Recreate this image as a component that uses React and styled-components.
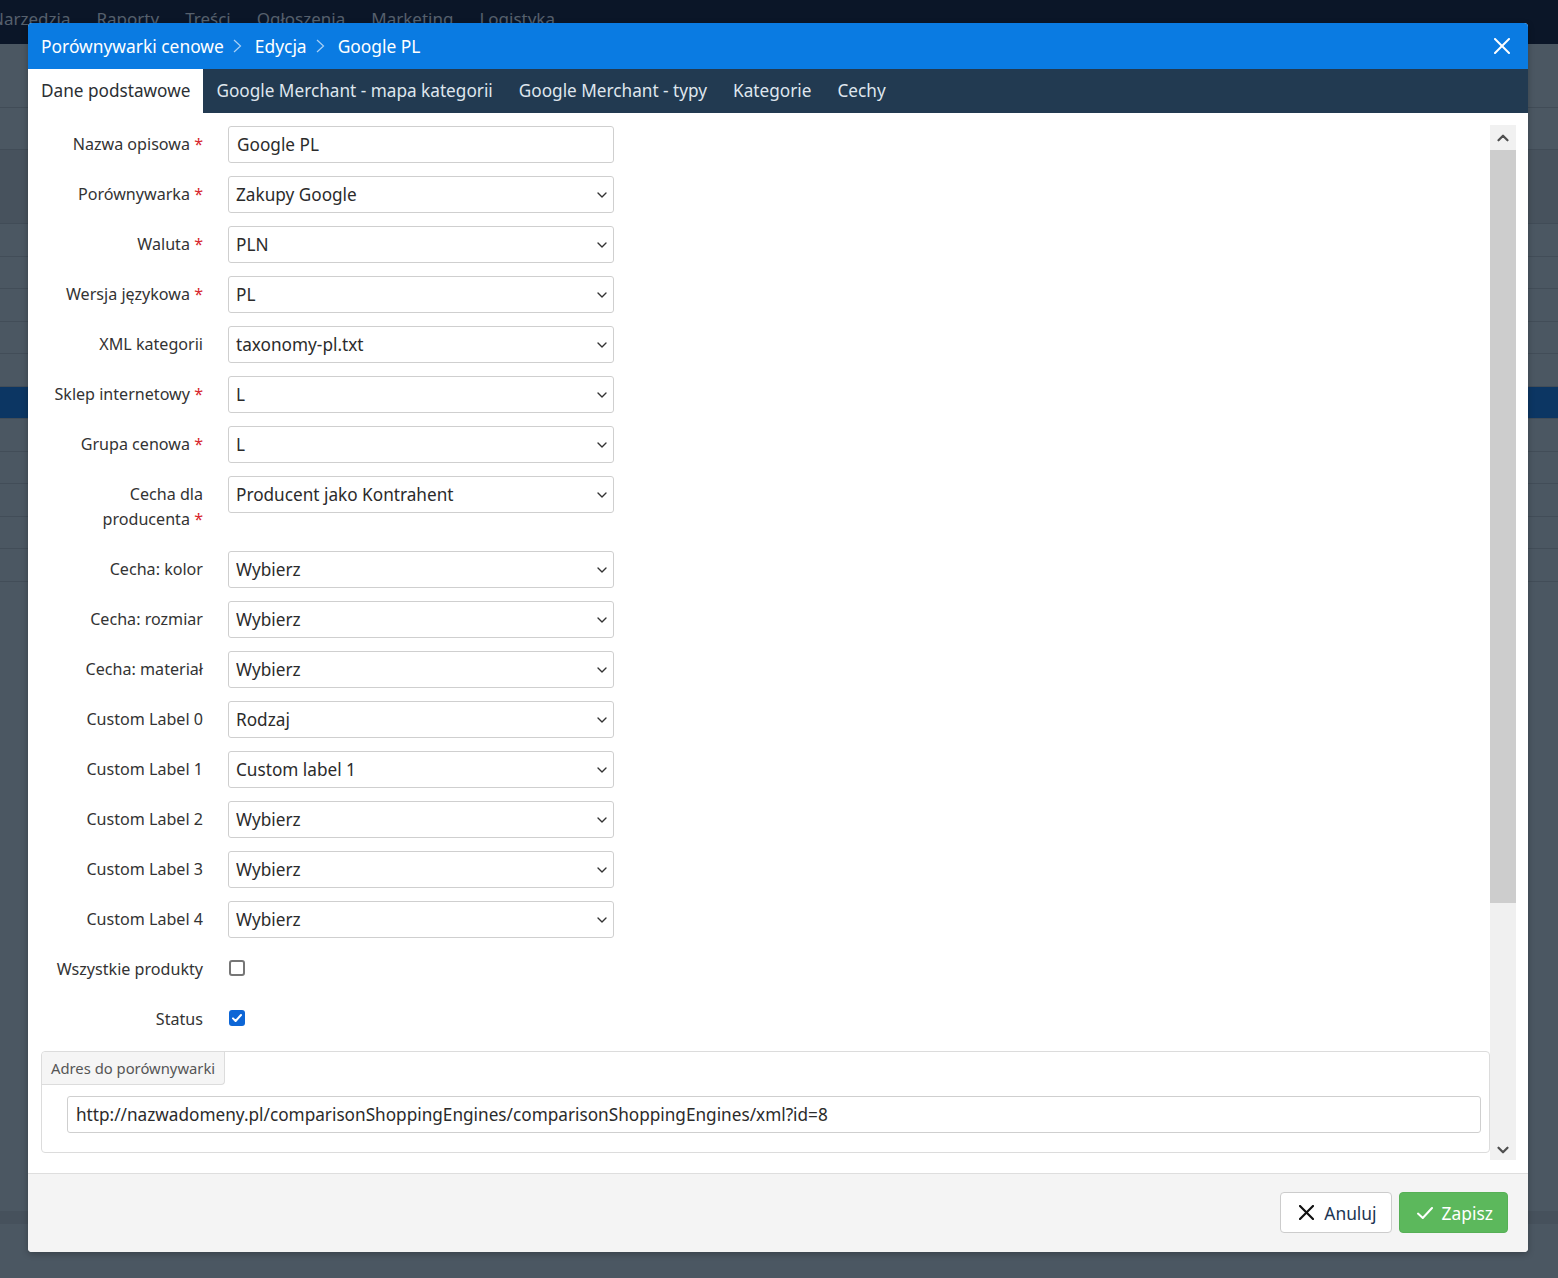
import styled, { createGlobalStyle } from 'styled-components'
import { ChevronDown, ChevronUp } from 'lucide-react'

const GlobalStyle = createGlobalStyle`
  html, body {
    margin: 0;
    padding: 0;
    font-family: "Noto Sans", "Open Sans", "Liberation Sans", sans-serif;
  }
  * { box-sizing: border-box; }
`

const Page = styled.div`
  position: relative;
  width: 1558px;
  height: 1278px;
  overflow: hidden;
  background: #4b5762;
`

const TopNav = styled.div`
  height: 44px;
  background: #0b1628;
  display: flex;
  align-items: center;
  gap: 26px;
  padding-bottom: 8px;
`

const NavItem = styled.span`
  font-size: 17px;
  color: #56606d;
  white-space: nowrap;
  &:first-child { margin-left: -9px; }
`

const Toolbar = styled.div`
  height: ${p => p.h}px;
  border-bottom: 1px solid #414c57;
  background: ${p => p.dark ? '#47525d' : 'transparent'};
`

const TableRow = styled.div`
  height: 32.5px;
  border-bottom: 1px solid #424d58;
  background: ${p => p.active ? '#0c3663' : 'transparent'};
`

const BottomBand = styled.div`
  margin-top: 629px;
  height: 13px;
  background: #46515c;
`

const Modal = styled.div`
  position: absolute;
  left: 28px;
  top: 23px;
  width: 1500px;
  height: 1229px;
  background: #fff;
  border-radius: 4px;
  overflow: hidden;
  display: flex;
  flex-direction: column;
  box-shadow: 0 2px 6px rgba(0, 0, 0, 0.25);
`

const Header = styled.div`
  height: 46px;
  flex: none;
  background: #0a7be2;
  display: flex;
  align-items: center;
  justify-content: space-between;
  padding: 0 18px 0 13px;
  color: #fff;
`

const Crumbs = styled.div`
  display: flex;
  align-items: center;
  font-size: 17.4px;
  padding-bottom: 1px;
`

const Sep = styled.svg`
  margin: 1px 13px 0 9px;
  color: #a9d0f5;
`

const CloseBtn = styled.button`
  border: 0;
  background: none;
  color: #fff;
  padding: 0;
  display: flex;
  cursor: pointer;
`

const Tabs = styled.div`
  height: 44px;
  flex: none;
  background: #223a51;
  display: flex;
`

const Tab = styled.div`
  padding: 0 13px;
  line-height: 44px;
  font-size: 17.2px;
  white-space: nowrap;
  color: ${p => p.active ? '#2b2f33' : '#dfe6ee'};
  background: ${p => p.active ? '#fff' : 'transparent'};
`

const Body = styled.div`
  flex: 1;
  display: flex;
  padding: 12px 12px 0 13px;
  min-height: 0;
`

const Content = styled.div`
  flex: 1;
  padding-top: 1px;
`

const Row = styled.div`
  display: grid;
  grid-template-columns: 162px 386px;
  column-gap: 25px;
  margin-bottom: 13px;
  align-items: start;
`

const Label = styled.label`
  text-align: right;
  font-size: 16.1px;
  line-height: 25px;
  padding: 6px 0;
  color: #333;
`

const Req = styled.span`
  color: #d8262c;
`

const Input = styled.input`
  width: 100%;
  height: 37px;
  border: 1px solid #cfcfcf;
  border-radius: 3px;
  padding: 0 8px;
  font-family: inherit;
  font-size: 17.2px;
  color: #2b2b2b;
  background: #fff;
  outline: none;
`

const SelectWrap = styled.div`
  position: relative;
  height: 37px;
`

const Select = styled.select`
  width: 100%;
  height: 37px;
  border: 1px solid #cfcfcf;
  border-radius: 3px;
  padding: 0 30px 0 7px;
  font-family: inherit;
  font-size: 17.2px;
  color: #2b2b2b;
  background: #fff;
  appearance: none;
  outline: none;
`

const Caret = styled(ChevronDown)`
  position: absolute;
  right: 4px;
  top: 11px;
  color: #333;
  pointer-events: none;
`

const CheckCell = styled.div`
  height: 37px;
  display: flex;
  align-items: center;
  padding: 0 0 3px 1px;
`

const Box = styled.span`
  width: 16px;
  height: 16px;
  border-radius: 3px;
  border: ${p => p.checked ? 'none' : '2px solid #767676'};
  background: ${p => p.checked ? '#0d66d6' : '#fff'};
  display: flex;
  align-items: center;
  justify-content: center;
  color: #fff;
`

const Fieldset = styled.div`
  border: 1px solid #dcdcdc;
  border-radius: 4px;
`

const Legend = styled.div`
  display: inline-block;
  height: 33px;
  line-height: 33px;
  padding: 0 9px;
  font-size: 14.8px;
  color: #555;
  background: #f5f5f5;
  border-right: 1px solid #dcdcdc;
  border-bottom: 1px solid #dcdcdc;
  border-bottom-right-radius: 4px;
  border-top-left-radius: 4px;
  vertical-align: top;
`

const UrlBox = styled.div`
  padding: 11px 8px 19px 25px;
`

const Scrollbar = styled.div`
  width: 26px;
  height: 1035px;
  flex: none;
  display: flex;
  flex-direction: column;
  background: #f0f0f0;
`

const ScrollBtn = styled.div`
  height: ${p => p.h}px;
  display: flex;
  align-items: center;
  justify-content: center;
  color: #505050;
  background: #f1f1f1;
`

const Thumb = styled.div`
  height: 753px;
  background: #cdcdcd;
`

const Track = styled.div`
  flex: 1;
`

const Footer = styled.div`
  flex: none;
  background: #f4f4f4;
  border-top: 1px solid #dedede;
  padding: 18px 20px 19px;
  display: flex;
  justify-content: flex-end;
  gap: 7px;
`

const Button = styled.button`
  height: 41px;
  display: flex;
  align-items: center;
  gap: ${p => p.primary ? 9 : 10}px;
  padding: 0 ${p => p.primary ? 14 : 14}px 0 ${p => p.primary ? 17 : 18}px;
  font-family: inherit;
  font-size: 17.4px;
  border-radius: 4px;
  cursor: pointer;
  color: ${p => p.primary ? '#fff' : '#1d3553'};
  background: ${p => p.primary ? '#5cb85c' : '#fff'};
  border: 1px solid ${p => p.primary ? '#56b056' : '#cccccc'};
`

const Cross = ({ size, width = 2, color = 'currentColor' }) => (
  <svg width={size} height={size} viewBox={`0 0 ${size} ${size}`} fill="none" stroke={color} strokeWidth={width} strokeLinecap="round">
    <line x1="1" y1="1" x2={size - 1} y2={size - 1} />
    <line x1={size - 1} y1="1" x2="1" y2={size - 1} />
  </svg>
)

const Tick = ({ w, h, width = 2, color = 'currentColor' }) => (
  <svg width={w} height={h} viewBox={`0 0 ${w} ${h}`} fill="none" stroke={color} strokeWidth={width} strokeLinecap="round" strokeLinejoin="round">
    <polyline points={`1,${h * 0.55} ${w * 0.36},${h - 1} ${w - 1},1`} />
  </svg>
)

const Chevron = () => (
  <Sep width="9" height="14" viewBox="0 0 9 14" fill="none" stroke="currentColor" strokeWidth="1.2">
    <polyline points="1,1 7.5,7 1,13" />
  </Sep>
)

const fields = [
  { label: 'Porównywarka', req: true, value: 'Zakupy Google' },
  { label: 'Waluta', req: true, value: 'PLN' },
  { label: 'Wersja językowa', req: true, value: 'PL' },
  { label: 'XML kategorii', value: 'taxonomy-pl.txt' },
  { label: 'Sklep internetowy', req: true, value: 'L' },
  { label: 'Grupa cenowa', req: true, value: 'L' },
  { label: ['Cecha dla', 'producenta'], req: true, value: 'Producent jako Kontrahent' },
  { label: 'Cecha: kolor', value: 'Wybierz' },
  { label: 'Cecha: rozmiar', value: 'Wybierz' },
  { label: 'Cecha: materiał', value: 'Wybierz' },
  { label: 'Custom Label 0', value: 'Rodzaj' },
  { label: 'Custom Label 1', value: 'Custom label 1' },
  { label: 'Custom Label 2', value: 'Wybierz' },
  { label: 'Custom Label 3', value: 'Wybierz' },
  { label: 'Custom Label 4', value: 'Wybierz' },
]

const tabs = ['Dane podstawowe', 'Google Merchant - mapa kategorii', 'Google Merchant - typy', 'Kategorie', 'Cechy']
const navItems = ['Narzedzia', 'Raporty', 'Treści', 'Ogłoszenia', 'Marketing', 'Logistyka']

const FieldLabel = ({ label, req }) => (
  <Label>
    {Array.isArray(label) ? <>{label[0]}<br />{label[1]}</> : label}
    {req && <> <Req>*</Req></>}
  </Label>
)

const SelectRow = ({ label, req, value }) => (
  <Row>
    <FieldLabel label={label} req={req} />
    <SelectWrap>
      <Select defaultValue={value}>
        <option>{value}</option>
      </Select>
      <Caret size={16} strokeWidth={2} />
    </SelectWrap>
  </Row>
)

const CheckRow = ({ label, checked }) => (
  <Row>
    <FieldLabel label={label} />
    <CheckCell>
      <Box checked={checked}>
        {checked && <Tick w={10} h={8} width={2} />}
      </Box>
    </CheckCell>
  </Row>
)

const Backdrop = () => (
  <>
    <TopNav>
      {navItems.map(n => <NavItem key={n}>{n}</NavItem>)}
    </TopNav>
    <Toolbar h={64} />
    <Toolbar h={42} />
    <Toolbar h={74} dark />
    {[0, 1, 2, 3, 4, 5, 6, 7, 8, 9, 10].map(i => (
      <TableRow key={i} active={i === 5} />
    ))}
    <BottomBand />
  </>
)

const App = () => {
  return (
    <Page>
      <GlobalStyle />
      <Backdrop />
      <Modal>
        <Header>
          <Crumbs>
            <span>Porównywarki cenowe</span>
            <Chevron />
            <span>Edycja</span>
            <Chevron />
            <span>Google PL</span>
          </Crumbs>
          <CloseBtn>
            <Cross size={16} width={2} />
          </CloseBtn>
        </Header>
        <Tabs>
          {tabs.map((t, i) => <Tab key={t} active={i === 0}>{t}</Tab>)}
        </Tabs>
        <Body>
          <Content>
            <Row>
              <FieldLabel label="Nazwa opisowa" req />
              <Input defaultValue="Google PL" />
            </Row>
            {fields.map((f, i) => <SelectRow key={i} {...f} />)}
            <CheckRow label="Wszystkie produkty" />
            <CheckRow label="Status" checked />
            <Fieldset>
              <Legend>Adres do porównywarki</Legend>
              <UrlBox>
                <Input defaultValue="http://nazwadomeny.pl/comparisonShoppingEngines/comparisonShoppingEngines/xml?id=8" />
              </UrlBox>
            </Fieldset>
          </Content>
          <Scrollbar>
            <ScrollBtn h={25}><ChevronUp size={18} strokeWidth={3} /></ScrollBtn>
            <Thumb />
            <Track />
            <ScrollBtn h={20}><ChevronDown size={18} strokeWidth={3} /></ScrollBtn>
          </Scrollbar>
        </Body>
        <Footer>
          <Button>
            <Cross size={15} width={2.2} color="#111" />
            Anuluj
          </Button>
          <Button primary>
            <Tick w={16} h={12} width={2} />
            Zapisz
          </Button>
        </Footer>
      </Modal>
    </Page>
  )
}

export default App
